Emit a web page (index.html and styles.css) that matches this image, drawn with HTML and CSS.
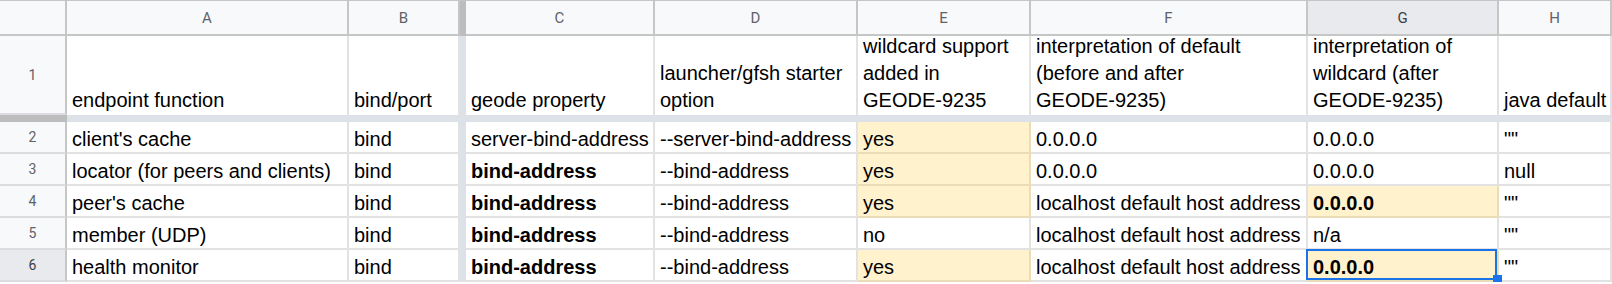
FILE: index.html
```html
<!DOCTYPE html>
<html>
<head>
<meta charset="utf-8">
<link rel="stylesheet" href="styles.css">
</head>
<body>
<div class="sheet">
  <div class="hd corner"></div>
  <div class="hd colhd">A</div>
  <div class="hd colhd">B</div>
  <div class="vdiv-hd"></div>
  <div class="hd colhd">C</div>
  <div class="hd colhd">D</div>
  <div class="hd colhd">E</div>
  <div class="hd colhd">F</div>
  <div class="hd colhd sel-hd">G</div>
  <div class="hd colhd">H</div>

  <div class="hd rowhd">1</div>
  <div class="cell wrap">endpoint function</div>
  <div class="cell wrap">bind/port</div>
  <div class="vdiv"></div>
  <div class="cell wrap">geode property</div>
  <div class="cell wrap">launcher/gfsh starter option</div>
  <div class="cell wrap"><span>wildcard support added in <span class="nb">GEODE-9235</span></span></div>
  <div class="cell wrap"><span>interpretation of default (before and after <span class="nb">GEODE-9235)</span></span></div>
  <div class="cell wrap"><span>interpretation of wildcard (after <span class="nb">GEODE-9235)</span></span></div>
  <div class="cell wrap">java default</div>

  <div class="hbar-hd"></div>
  <div class="hbar"></div>

  <div class="hd rowhd">2</div>
  <div class="cell">client's cache</div>
  <div class="cell">bind</div>
  <div class="vdiv"></div>
  <div class="cell">server-bind-address</div>
  <div class="cell">--server-bind-address</div>
  <div class="cell y">yes</div>
  <div class="cell">0.0.0.0</div>
  <div class="cell">0.0.0.0</div>
  <div class="cell">""</div>

  <div class="hd rowhd">3</div>
  <div class="cell">locator (for peers and clients)</div>
  <div class="cell">bind</div>
  <div class="vdiv"></div>
  <div class="cell b">bind-address</div>
  <div class="cell">--bind-address</div>
  <div class="cell y">yes</div>
  <div class="cell">0.0.0.0</div>
  <div class="cell">0.0.0.0</div>
  <div class="cell">null</div>

  <div class="hd rowhd">4</div>
  <div class="cell">peer's cache</div>
  <div class="cell">bind</div>
  <div class="vdiv"></div>
  <div class="cell b">bind-address</div>
  <div class="cell">--bind-address</div>
  <div class="cell y">yes</div>
  <div class="cell">localhost default host address</div>
  <div class="cell y b">0.0.0.0</div>
  <div class="cell">""</div>

  <div class="hd rowhd">5</div>
  <div class="cell">member (UDP)</div>
  <div class="cell">bind</div>
  <div class="vdiv"></div>
  <div class="cell b">bind-address</div>
  <div class="cell">--bind-address</div>
  <div class="cell">no</div>
  <div class="cell">localhost default host address</div>
  <div class="cell">n/a</div>
  <div class="cell">""</div>

  <div class="hd rowhd sel-hd">6</div>
  <div class="cell">health monitor</div>
  <div class="cell">bind</div>
  <div class="vdiv"></div>
  <div class="cell b">bind-address</div>
  <div class="cell">--bind-address</div>
  <div class="cell y">yes</div>
  <div class="cell">localhost default host address</div>
  <div class="cell y b selected">0.0.0.0<span class="handle"></span></div>
  <div class="cell">""</div>
</div>
</body>
</html>
```
FILE: styles.css
```css
html, body {
  margin: 0;
  padding: 0;
  background: #ffffff;
}

body {
  font-family: "Liberation Sans", Arial, sans-serif;
  overflow: hidden;
}

.sheet {
  display: grid;
  grid-template-columns: 67px 282px 111px 6px 189px 203px 173px 277px 191px 113px;
  grid-template-rows: 36px 79px 7px repeat(5, 32px);
}

.cell {
  box-sizing: border-box;
  display: flex;
  flex-direction: column;
  justify-content: flex-end;
  padding: 0 3px 0 5px;
  border-right: 2px solid #e2e2e2;
  border-bottom: 2px solid #e2e2e2;
  font-size: 20px;
  line-height: 26px;
  color: #000000;
  white-space: nowrap;
  overflow: hidden;
}

.cell.wrap {
  white-space: normal;
  border-bottom: none;
  line-height: 27px;
  padding-bottom: 1px;
  overflow: visible;
}

.nb {
  white-space: nowrap;
}

.cell.b {
  font-weight: bold;
}

.cell.y {
  background: #fff2cc;
  border-right-color: #eadcb6;
  border-bottom-color: #eadcb6;
}

.hd {
  box-sizing: border-box;
  display: flex;
  align-items: center;
  justify-content: center;
  background: #f8f9fa;
  border-right: 2px solid #c4c7c5;
  border-bottom: 2px solid #c4c7c5;
  font-family: Roboto, "Liberation Sans", Arial, sans-serif;
  font-size: 15px;
  color: #5f6368;
}

.colhd,
.corner {
  border-top: 1px solid #c4c7c5;
}

.rowhd {
  border-bottom-color: #dadce0;
  font-size: 14px;
}

.sel-hd {
  background: #e8eaed;
  color: #3c4043;
}

.vdiv-hd {
  background: #bdbdbd;
  border-top: 1px solid #c4c7c5;
}

.vdiv {
  background: #dde1e8;
}

.hbar-hd {
  background: #bdbdbd;
}

.hbar {
  grid-column: 2 / 11;
  background: #dde1e8;
}

.selected {
  position: relative;
  overflow: visible;
  z-index: 1;
}

.selected::before {
  content: "";
  position: absolute;
  left: -2px;
  top: -1px;
  right: 0;
  bottom: 0;
  border: 2px solid #1a73e8;
}

.handle {
  position: absolute;
  right: -5px;
  bottom: -3px;
  width: 9px;
  height: 8px;
  background: #1a73e8;
}
```
